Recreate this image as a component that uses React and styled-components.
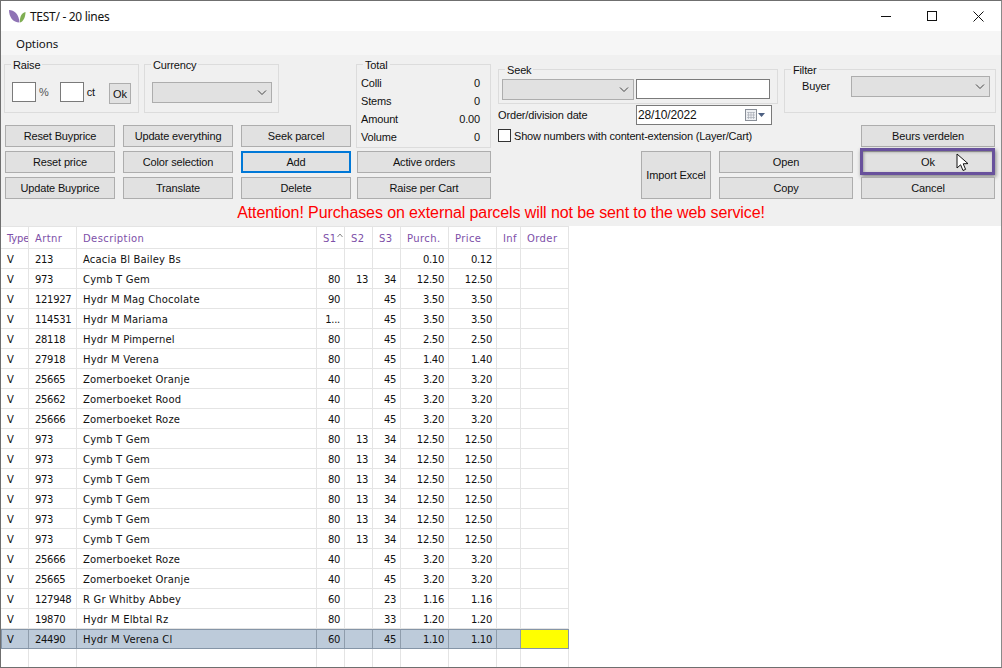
import React from "react";
import styled, { createGlobalStyle } from "styled-components";

const Global = createGlobalStyle`
  html, body { margin: 0; padding: 0; background: #fff; }
  #root { width: 1002px; height: 668px; }
`;

const Window = styled.div`
  box-sizing: border-box;
  width: 1002px;
  height: 668px;
  border: 1px solid #6f6f6f;
  border-right-color: #8a8a8a;
  display: flex;
  flex-direction: column;
  overflow: hidden;
  background: #fff;
  font-family: "Liberation Sans", Arial, sans-serif;
  font-size: 11px;
  letter-spacing: -0.15px;
  color: #111;
`;

const TitleBar = styled.div`
  height: 30px;
  flex: none;
  display: flex;
  align-items: center;
  padding-left: 8px;
  background: #fff;
`;
const Title = styled.span`
  margin-left: 4px;
  font: 12px "Noto Sans", sans-serif;
  letter-spacing: -0.3px;
  color: #111;
`;
const WinControls = styled.div`
  margin-left: auto;
  display: flex;
  align-items: center;
  height: 100%;
`;
const WinBtn = styled.div`
  width: 46px;
  height: 100%;
  display: flex;
  align-items: center;
  justify-content: center;
`;

const MenuBar = styled.div`
  height: 24px;
  flex: none;
  background: #f6f6f6;
  display: flex;
  align-items: center;
  padding-left: 15px;
  font: 11.5px "Noto Sans", sans-serif;
  letter-spacing: -0.1px;
  color: #111;
`;

const Panel = styled.div`
  flex: none;
  height: 171px;
  box-sizing: border-box;
  background: #f0f0f0;
  position: relative;
  display: flex;
  padding: 3px 0 0 3px;
`;

const LeftBlock = styled.div`
  width: 347px;
  flex: none;
  display: flex;
  flex-direction: column;
`;
const GroupRow = styled.div`
  display: flex;
  gap: 5px;
`;
const Group = styled.fieldset`
  box-sizing: border-box;
  margin: 0;
  padding: 0;
  width: ${(p) => p.$w}px;
  height: ${(p) => p.$h}px;
  min-inline-size: 0;
  border: 1px solid #dcdcdc;
  flex: none;
`;
const GroupTitle = styled.legend`
  margin-left: 6px;
  padding: 0 2px;
  font-size: 11px;
  line-height: 15px;
  height: 13px;
`;
const GroupBody = styled.div`
  display: flex;
  align-items: flex-start;
  padding: ${(p) => p.$pad || "0"};
`;
const ButtonGrid = styled.div`
  margin: 12px 0 0 1px;
  display: grid;
  grid-template-columns: repeat(3, 110px);
  grid-auto-rows: 22px;
  gap: 4px 8px;
`;
const Btn = styled.button`
  box-sizing: border-box;
  width: ${(p) => (p.$w ? `${p.$w}px` : "auto")};
  height: ${(p) => p.$h || 22}px;
  margin-right: ${(p) => p.$mr || 0}px;
  padding: 0;
  background: #e1e1e1;
  border: ${(p) => (p.$focus ? "2px solid #0078d7" : "1px solid #adadad")};
  font: 11px "Liberation Sans", Arial, sans-serif;
  letter-spacing: -0.15px;
  color: #111;
  position: relative;
`;
const Highlight = styled.span`
  position: absolute;
  left: -2px;
  right: -1px;
  top: -4px;
  bottom: -3px;
  border: 3px solid #68519c;
  box-shadow: 1px 2px 4px rgba(0, 0, 0, 0.45), inset 1px 1px 3px rgba(0, 0, 0, 0.3);
  pointer-events: none;
`;
const CursorArt = styled.svg`
  position: absolute;
  left: 94px;
  top: 1px;
  pointer-events: none;
`;
const WhiteInput = styled.div`
  box-sizing: border-box;
  width: ${(p) => p.$w}px;
  height: 20px;
  margin-left: ${(p) => p.$ml || 0}px;
  background: #fff;
  border: 1px solid #7a7a7a;
  flex: none;
  display: flex;
  align-items: center;
  padding-left: 1px;
  font-size: 12px;
  position: relative;
`;
const Unit = styled.span`
  margin: 0 ${(p) => p.$mr}px 0 3px;
  line-height: 20px;
  color: ${(p) => p.$c || "#111"};
`;
const RaiseOk = styled(Btn)`
  margin-top: 1px;
`;
const Select = styled.div`
  box-sizing: border-box;
  flex: none;
  width: ${(p) => p.$w}px;
  height: 21px;
  background: #e1e1e1;
  border: 1px solid #adadad;
  display: flex;
  align-items: center;
  justify-content: flex-end;
  padding-right: 4px;
`;

const TotalBlock = styled.div`
  margin-left: 5px;
  width: 135px;
  flex: none;
  display: flex;
  flex-direction: column;
  gap: 4px;
`;
const TotalList = styled.div`
  padding: 3px 10px 0 4px;
  display: grid;
  grid-auto-rows: 18px;
  align-items: center;
`;
const TotalRow = styled.div`
  display: flex;
  justify-content: space-between;
  line-height: 18px;
`;
const TotalButtons = styled.div`
  margin: -1px 0 0 1px;
  display: flex;
  flex-direction: column;
  gap: 4px;
`;

const RightBlock = styled.div`
  margin: 5px 0 0 7px;
  width: 498px;
  flex: none;
  display: flex;
  flex-direction: column;
`;
const RightTop = styled.div`
  display: flex;
  gap: 6px;
  height: 84px;
`;
const SeekCol = styled.div`
  width: 280px;
  flex: none;
  display: flex;
  flex-direction: column;
`;
const FilterCol = styled.div`
  width: 212px;
  flex: none;
  display: flex;
  flex-direction: column;
  align-items: flex-end;
  gap: 12px;
`;
const DateRow = styled.div`
  margin-top: 1px;
  display: flex;
  align-items: center;
  justify-content: space-between;
  width: 274px;
`;
const CheckRow = styled.label`
  margin-top: 4px;
  display: flex;
  align-items: center;
  white-space: nowrap;
  letter-spacing: -0.2px;
`;
const CheckBox = styled.span`
  box-sizing: border-box;
  width: 13px;
  height: 13px;
  background: #fff;
  border: 1px solid #333;
  margin-right: 3px;
  flex: none;
`;
const DateValue = styled.span`
  font-size: 12px;
`;
const CalIcon = styled.svg`
  position: absolute;
  right: 1px;
  top: 3px;
`;
const BuyerLabel = styled.span`
  margin-right: 21px;
  line-height: 21px;
`;
const Actions = styled.div`
  margin-top: 4px;
  display: flex;
  justify-content: flex-end;
  gap: 8px;
  padding-right: 1px;
`;
const ActionCol = styled.div`
  display: flex;
  flex-direction: column;
  gap: 4px;
  width: 134px;
`;
const Warning = styled.div`
  position: absolute;
  left: 0;
  right: 0;
  top: 148px;
  text-align: center;
  font: 16px/19px "Liberation Sans", Arial, sans-serif;
  letter-spacing: -0.1px;
  color: #ff0000;
`;

const GridArea = styled.div`
  flex: 1;
  min-height: 0;
  background: #fff;
  overflow: hidden;
`;
const Row = styled.div`
  display: grid;
  grid-template-columns: 28px 48px 240px 28px 28px 28px 48px 48px 24px 48px;
  width: 568px;
  height: ${(p) => p.$h || 20}px;
  box-sizing: border-box;
  background: ${(p) => (p.$sel ? "#bdcbda" : "#fff")};
  ${(p) => p.$sel && "outline: 1px solid #8595a7; outline-offset: -1px; box-shadow: 0 -1px 0 #8595a7;"}
  ${(p) => p.$head && "border-top: 1px solid #e4e4e4;"}
`;
const Cell = styled.div`
  box-sizing: border-box;
  overflow: hidden;
  white-space: nowrap;
  border-right: 1px solid ${(p) => (p.$sel ? "#8f9dac" : "#e4e4e4")};
  border-bottom: 1px solid ${(p) => (p.$sel ? "#8595a7" : "#e4e4e4")};
  padding: ${(p) => (p.$num ? "0 4px 0 0" : "0 0 0 6px")};
  text-align: ${(p) => (p.$num ? "right" : "left")};
  background: ${(p) => p.$bg || "transparent"};
  font: 10px/21px "DejaVu Sans", sans-serif;
  letter-spacing: ${(p) => (p.$num || p.$code ? "-0.3px" : "0.18px")};
  color: #111;
`;
const HeadCell = styled(Cell)`
  color: #7d4fa8;
  line-height: 23px;
  letter-spacing: ${(p) => (p.$tight ? "-0.2px" : "0.4px")};
  position: relative;
`;
const SortArrow = styled.svg`
  position: absolute;
  right: 1px;
  top: 6px;
`;

const Chevron = () => (
  <svg width="10" height="6" viewBox="0 0 10 6" fill="none" stroke="#444" strokeWidth="1">
    <path d="M1 .5 L5 4.5 L9 .5" />
  </svg>
);

const data = [
  ["213", "Acacia Bl Bailey Bs", "", "", "", "0.10", "0.12"],
  ["973", "Cymb T Gem", "80", "13", "34", "12.50", "12.50"],
  ["121927", "Hydr M Mag Chocolate", "90", "", "45", "3.50", "3.50"],
  ["114531", "Hydr M Mariama", "1...", "", "45", "3.50", "3.50"],
  ["28118", "Hydr M Pimpernel", "80", "", "45", "2.50", "2.50"],
  ["27918", "Hydr M Verena", "80", "", "45", "1.40", "1.40"],
  ["25665", "Zomerboeket Oranje", "40", "", "45", "3.20", "3.20"],
  ["25662", "Zomerboeket Rood", "40", "", "45", "3.20", "3.20"],
  ["25666", "Zomerboeket Roze", "40", "", "45", "3.20", "3.20"],
  ["973", "Cymb T Gem", "80", "13", "34", "12.50", "12.50"],
  ["973", "Cymb T Gem", "80", "13", "34", "12.50", "12.50"],
  ["973", "Cymb T Gem", "80", "13", "34", "12.50", "12.50"],
  ["973", "Cymb T Gem", "80", "13", "34", "12.50", "12.50"],
  ["973", "Cymb T Gem", "80", "13", "34", "12.50", "12.50"],
  ["973", "Cymb T Gem", "80", "13", "34", "12.50", "12.50"],
  ["25666", "Zomerboeket Roze", "40", "", "45", "3.20", "3.20"],
  ["25665", "Zomerboeket Oranje", "40", "", "45", "3.20", "3.20"],
  ["127948", "R Gr Whitby Abbey", "60", "", "23", "1.16", "1.16"],
  ["19870", "Hydr M Elbtal Rz", "80", "", "33", "1.20", "1.20"],
  ["24490", "Hydr M Verena Cl", "60", "", "45", "1.10", "1.10"],
];

const leftButtons = [
  ["Reset Buyprice"], ["Update everything"], ["Seek parcel"],
  ["Reset price"], ["Color selection"], ["Add", true],
  ["Update Buyprice"], ["Translate"], ["Delete"],
];

const totals = [["Colli", "0"], ["Stems", "0"], ["Amount", "0.00"], ["Volume", "0"]];

export default function App() {
  return (
    <Window>
      <Global />
      <TitleBar>
        <svg width="17" height="13" viewBox="0 0 17 13">
          <path d="M0 0 C5 0 10 4 10.5 12.5 C4 12.5 0 7 0 0Z" fill="#8f73b5" />
          <path d="M16.5 2 C16.5 7 14.5 11.5 11 12.5 C10.5 7 12.5 3 16.5 2Z" fill="#7fae52" />
        </svg>
        <Title>TEST/ - 20 lines</Title>
        <WinControls>
          <WinBtn>
            <svg width="10" height="10"><path d="M0 5.5H10" stroke="#111" /></svg>
          </WinBtn>
          <WinBtn>
            <svg width="10" height="10"><rect x=".5" y=".5" width="9" height="9" fill="none" stroke="#111" /></svg>
          </WinBtn>
          <WinBtn>
            <svg width="11" height="11"><path d="M.5 .5L10.5 10.5M10.5 .5L.5 10.5" stroke="#111" /></svg>
          </WinBtn>
        </WinControls>
      </TitleBar>
      <MenuBar>Options</MenuBar>
      <Panel>
        <LeftBlock>
          <GroupRow>
            <Group $w={135} $h={55}>
              <GroupTitle>Raise</GroupTitle>
              <GroupBody $pad="11px 0 0 7px">
                <WhiteInput $w={24} />
                <Unit $mr={11} $c="#555">%</Unit>
                <WhiteInput $w={24} />
                <Unit $mr={14}>ct</Unit>
                <RaiseOk $w={22} $h={21}>Ok</RaiseOk>
              </GroupBody>
            </Group>
            <Group $w={135} $h={55}>
              <GroupTitle>Currency</GroupTitle>
              <GroupBody $pad="11px 0 0 7px">
                <Select $w={120}><Chevron /></Select>
              </GroupBody>
            </Group>
          </GroupRow>
          <ButtonGrid>
            {leftButtons.map(([t, f]) => (
              <Btn key={t} $focus={f}>{t}</Btn>
            ))}
          </ButtonGrid>
        </LeftBlock>
        <TotalBlock>
          <Group $w={135} $h={90}>
            <GroupTitle>Total</GroupTitle>
            <TotalList>
              {totals.map(([k, v]) => (
                <TotalRow key={k}>
                  <span>{k}</span>
                  <span>{v}</span>
                </TotalRow>
              ))}
            </TotalList>
          </Group>
          <TotalButtons>
            <Btn $w={134}>Active orders</Btn>
            <Btn $w={134}>Raise per Cart</Btn>
          </TotalButtons>
        </TotalBlock>
        <RightBlock>
          <RightTop>
            <SeekCol>
              <Group $w={280} $h={41}>
                <GroupTitle>Seek</GroupTitle>
                <GroupBody $pad="3px 0 0 3px">
                  <Select $w={132}><Chevron /></Select>
                  <WhiteInput $w={134} $ml={2} />
                </GroupBody>
              </Group>
              <DateRow>
                <span>Order/division date</span>
                <WhiteInput $w={136}>
                  <DateValue>28/10/2022</DateValue>
                  <CalIcon width="25" height="14" viewBox="0 0 25 14">
                    <rect x=".5" y=".5" width="11" height="11" fill="#eef0f3" stroke="#8a8f98" />
                    <path d="M2 3.5H10M2 6H10M2 8.5H10M3.5 3V10M6 3V10M8.5 3V10" stroke="#a9aeb6" strokeWidth=".7" />
                    <path d="M13 4H20L16.5 8Z" fill="#4d6082" />
                  </CalIcon>
                </WhiteInput>
              </DateRow>
              <CheckRow>
                <CheckBox />
                Show numbers with content-extension (Layer/Cart)
              </CheckRow>
            </SeekCol>
            <FilterCol>
              <Group $w={212} $h={50}>
                <GroupTitle>Filter</GroupTitle>
                <GroupBody $pad="0 0 0 17px">
                  <BuyerLabel>Buyer</BuyerLabel>
                  <Select $w={139}><Chevron /></Select>
                </GroupBody>
              </Group>
              <Btn $w={134} $mr={1}>Beurs verdelen</Btn>
            </FilterCol>
          </RightTop>
          <Actions>
            <Btn $w={70} $h={48}>Import Excel</Btn>
            <ActionCol>
              <Btn>Open</Btn>
              <Btn>Copy</Btn>
            </ActionCol>
            <ActionCol>
              <Btn>
                Ok
                <Highlight />
                <CursorArt width="14" height="20" viewBox="0 0 14 20">
                  <path d="M1 1 L1 15 L4.6 11.8 L7 17.5 L9.6 16.4 L7.2 10.8 L12 10.6 Z" fill="#fff" stroke="#111" strokeWidth="1" />
                </CursorArt>
              </Btn>
              <Btn>Cancel</Btn>
            </ActionCol>
          </Actions>
        </RightBlock>
        <Warning>Attention! Purchases on external parcels will not be sent to the web service!</Warning>
      </Panel>
      <GridArea>
        <Row $h={23} $head>
          <HeadCell $tight>Type</HeadCell>
          <HeadCell>Artnr</HeadCell>
          <HeadCell>Description</HeadCell>
          <HeadCell>
            S1
            <SortArrow width="6" height="5" viewBox="0 0 6 5" fill="none" stroke="#888">
              <path d="M.5 4 L3 1 L5.5 4" />
            </SortArrow>
          </HeadCell>
          <HeadCell>S2</HeadCell>
          <HeadCell>S3</HeadCell>
          <HeadCell>Purch.</HeadCell>
          <HeadCell>Price</HeadCell>
          <HeadCell>Inf</HeadCell>
          <HeadCell>Order</HeadCell>
        </Row>
        {data.map((r, i) => {
          const sel = i === data.length - 1;
          return (
            <Row key={i} $sel={sel}>
              <Cell $sel={sel}>V</Cell>
              <Cell $sel={sel} $code>{r[0]}</Cell>
              <Cell $sel={sel}>{r[1]}</Cell>
              <Cell $sel={sel} $num>{r[2]}</Cell>
              <Cell $sel={sel} $num>{r[3]}</Cell>
              <Cell $sel={sel} $num>{r[4]}</Cell>
              <Cell $sel={sel} $num>{r[5]}</Cell>
              <Cell $sel={sel} $num>{r[6]}</Cell>
              <Cell $sel={sel} />
              <Cell $sel={sel} $bg={sel ? "#ffff00" : undefined} />
            </Row>
          );
        })}
        <Row>
          {Array.from({ length: 10 }, (_, i) => <Cell key={i} />)}
        </Row>
      </GridArea>
    </Window>
  );
}
